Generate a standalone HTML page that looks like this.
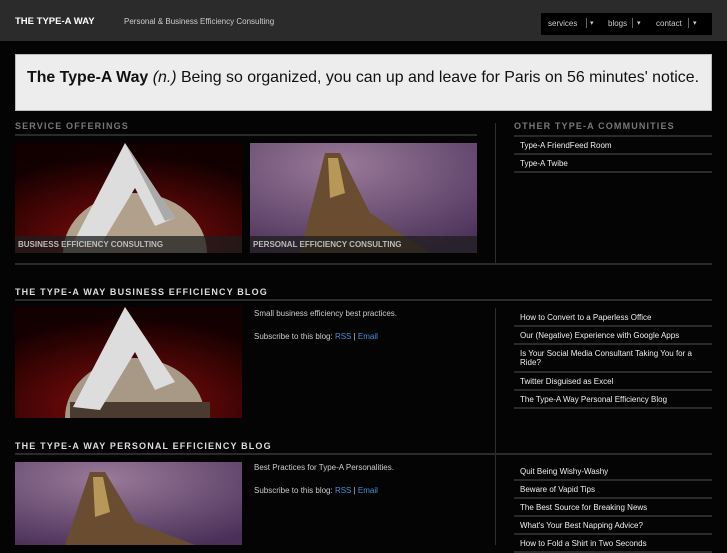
<!DOCTYPE html>
<html><head><style>
*{margin:0;padding:0;box-sizing:border-box}
body{width:727px;height:545px;overflow:hidden;background:#040404;font-family:"Liberation Sans",sans-serif;color:#ddd;position:relative}
.a{position:absolute}
.hdr{left:0;top:0;width:727px;height:41px;background:#2b2b2b}
.h2{font-size:9px;font-weight:bold;letter-spacing:1.15px;color:#ddd;white-space:nowrap}
.line{height:2px;background:#2a2a2a}
.vl{width:1px;background:#2e2e2e}
.li{font-size:8px;color:#eee;border-bottom:2px solid #2a2a2a;padding:0 6px;}
a{color:#4a8ed8;text-decoration:none}
.cap{left:0;bottom:0;width:100%;height:17px;background:rgba(30,30,30,.75);font-size:8px;font-weight:bold;color:#bbb;padding:4px 3px}
.t{font-size:8px;color:#ccc}
.nav span{position:absolute;top:6px}
.bar{top:5px!important;width:1px;height:10px;background:#666}
</style></head><body>
<div class="a hdr"></div>
<div class="a" style="left:15px;top:16px;font-size:9.5px;font-weight:bold;color:#fff">THE TYPE-A WAY</div>
<div class="a" style="left:124px;top:17px;font-size:8px;color:#ccc">Personal &amp; Business Efficiency Consulting</div>
<div class="a nav" style="left:541px;top:13px;width:171px;height:22px;background:#000;font-size:8px;color:#ccc">
<span style="left:7px">services</span><span class="bar" style="left:45px"></span><span style="left:49px;font-size:7px">▾</span>
<span style="left:67px">blogs</span><span class="bar" style="left:91px"></span><span style="left:96px;font-size:7px">▾</span>
<span style="left:115px">contact</span><span class="bar" style="left:147px"></span><span style="left:152px;font-size:7px">▾</span>
</div>
<div class="a" style="left:15px;top:54px;width:697px;height:57px;background:#ededed;border:1px solid #bbb;color:#111;font-size:15.9px;padding:14px 0 0 11px;white-space:nowrap"><b>The Type-A Way</b> <i>(n.)</i> Being so organized, you can up and leave for Paris on 56 minutes' notice.</div>

<div class="a h2" style="left:15px;top:121px;color:#777">SERVICE OFFERINGS</div>
<div class="a line" style="left:15px;top:134px;width:462px"></div>
<div class="a vl" style="left:495px;top:123px;height:140px"></div>
<div class="a h2" style="left:514px;top:121px;color:#777">OTHER TYPE-A COMMUNITIES</div>
<div class="a line" style="left:514px;top:135px;width:198px"></div>
<div class="a" style="left:514px;top:137px;width:198px">
<div class="li" style="height:18px;padding-top:4px">Type-A FriendFeed Room</div>
<div class="li" style="height:18px;padding-top:4px">Type-A Twibe</div></div>

<svg class="a" style="left:15px;top:143px" width="227" height="110"><defs><radialGradient id="r" cx=".5" cy=".9" r=".8"><stop offset="0" stop-color="#8a0c0c"/><stop offset="1" stop-color="#120000"/></radialGradient></defs><rect width="227" height="110" fill="url(#r)"/><ellipse cx="120" cy="110" rx="72" ry="60" fill="#b0a08c"/><polygon points="58,100 110,0 160,75 140,83 120,45 85,103" fill="#ddd"/><polygon points="110,0 160,75 150,78" fill="#aaa"/></svg>
<div class="a" style="left:15px;top:236px;width:227px;height:17px"><div class="a cap">BUSINESS EFFICIENCY CONSULTING</div></div>
<svg class="a" style="left:250px;top:143px" width="227" height="110"><defs><radialGradient id="p" cx=".4" cy=".2" r=".9"><stop offset="0" stop-color="#9a7a9a"/><stop offset="1" stop-color="#4a3058"/></radialGradient></defs><rect width="227" height="110" fill="url(#p)"/><polygon points="75,10 90,10 120,70 180,110 90,110 50,110" fill="#6a4c30"/><polygon points="78,15 88,15 95,50 80,55" fill="#b89858"/></svg>
<div class="a" style="left:250px;top:236px;width:227px;height:17px"><div class="a cap">PERSONAL EFFICIENCY CONSULTING</div></div>
<div class="a line" style="left:15px;top:263px;width:697px"></div>

<div class="a h2" style="left:15px;top:287px">THE TYPE-A WAY BUSINESS EFFICIENCY BLOG</div>
<div class="a line" style="left:15px;top:299px;width:697px"></div>
<svg class="a" style="left:15px;top:307px" width="227" height="111"><defs><radialGradient id="r2" cx=".5" cy=".9" r=".8"><stop offset="0" stop-color="#8a0c0c"/><stop offset="1" stop-color="#150000"/></radialGradient></defs><rect width="227" height="111" fill="url(#r2)"/><ellipse cx="120" cy="111" rx="70" ry="60" fill="#a89886"/><rect x="55" y="95" width="140" height="16" fill="#4a3a30"/><polygon points="58,100 110,0 160,75 140,83 120,45 85,103" fill="#ddd"/></svg>
<div class="a t" style="left:254px;top:309px">Small business efficiency best practices.</div>
<div class="a t" style="left:254px;top:332px">Subscribe to this blog: <a>RSS</a> | <a>Email</a></div>
<div class="a vl" style="left:495px;top:308px;height:180px"></div>
<div class="a" style="left:514px;top:308px;width:198px">
<div class="li" style="height:19px;padding-top:5px">How to Convert to a Paperless Office</div>
<div class="li" style="height:18px;padding-top:4px">Our (Negative) Experience with Google Apps</div>
<div class="li" style="height:28px;padding-top:4px">Is Your Social Media Consultant Taking You for a Ride?</div>
<div class="li" style="height:18px;padding-top:4px">Twitter Disguised as Excel</div>
<div class="li" style="height:18px;padding-top:4px">The Type-A Way Personal Efficiency Blog</div></div>

<div class="a h2" style="left:15px;top:441px">THE TYPE-A WAY PERSONAL EFFICIENCY BLOG</div>
<div class="a line" style="left:15px;top:453px;width:697px"></div>
<svg class="a" style="left:15px;top:462px" width="227" height="83"><rect width="227" height="83" fill="url(#p)"/><polygon points="75,10 90,10 120,60 180,83 90,83 50,83" fill="#6a4c30"/><polygon points="78,15 88,15 95,50 80,55" fill="#b89858"/></svg>
<div class="a t" style="left:254px;top:463px">Best Practices for Type-A Personalities.</div>
<div class="a t" style="left:254px;top:486px">Subscribe to this blog: <a>RSS</a> | <a>Email</a></div>
<div class="a vl" style="left:495px;top:462px;height:83px"></div>
<div class="a" style="left:514px;top:462px;width:198px">
<div class="li" style="height:19px;padding-top:5px">Quit Being Wishy-Washy</div>
<div class="li" style="height:18px;padding-top:4px">Beware of Vapid Tips</div>
<div class="li" style="height:18px;padding-top:4px">The Best Source for Breaking News</div>
<div class="li" style="height:18px;padding-top:4px">What's Your Best Napping Advice?</div>
<div class="li" style="height:18px;padding-top:4px">How to Fold a Shirt in Two Seconds</div></div>
</body></html>
